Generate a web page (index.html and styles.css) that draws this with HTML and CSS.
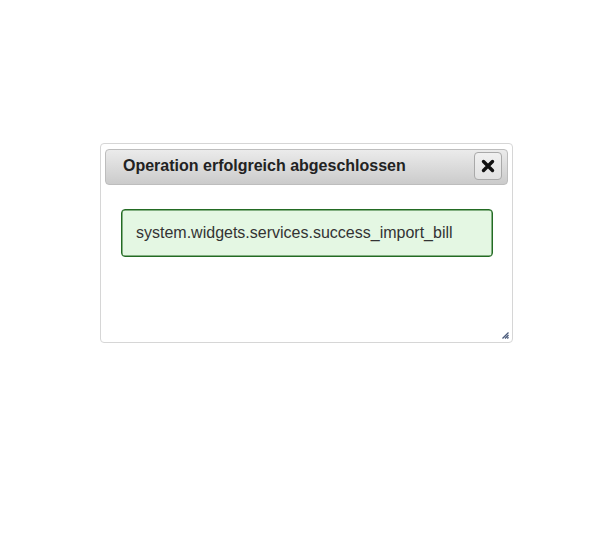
FILE: index.html
```html
<!DOCTYPE html>
<html lang="de">
<head>
<meta charset="utf-8">
<title>Dialog</title>
<link rel="stylesheet" href="styles.css">
</head>
<body>
<div class="stage">
  <div class="dialog">
    <div class="titlebar">
      <span class="title">Operation erfolgreich abgeschlossen</span>
      <button class="close" type="button" aria-label="Schließen">
        <svg width="14" height="14" viewBox="0 0 14 14"><path d="M2.5 2.5 L11.5 11.5 M11.5 2.5 L2.5 11.5" stroke="#111" stroke-width="3.4" stroke-linecap="round"/></svg>
      </button>
    </div>
    <div class="content">
      <div class="message">system.widgets.services.success_import_bill</div>
    </div>
    <div class="grip">
      <svg width="7" height="7" viewBox="0 0 7 7"><path d="M6.5 0.5 L0.5 6.5 M6.5 3 L3 6.5 M6.5 5.3 L5.3 6.5" stroke="#4a5a7a" stroke-width="1.3"/></svg>
    </div>
  </div>
</div>
</body>
</html>
```

FILE: styles.css
```css
html, body {
  margin: 0;
  padding: 0;
  background: #ffffff;
}

.stage {
  padding: 143px 0 0 100px;
  font-family: "Liberation Sans", Arial, sans-serif;
}

.dialog {
  position: relative;
  box-sizing: border-box;
  width: 413px;
  height: 200px;
  border: 1px solid #d6d6d6;
  border-radius: 4px;
  padding: 5px 4px;
  background: #fff;
}

.titlebar {
  box-sizing: border-box;
  height: 36px;
  border: 1px solid #bdbdbd;
  border-radius: 4px;
  background: linear-gradient(#ebebeb, #cbcbcb);
  display: flex;
  align-items: center;
  justify-content: space-between;
  padding: 0 5px 2px 17px;
}

.title {
  font-weight: bold;
  font-size: 16px;
  color: #222;
}

.close {
  box-sizing: border-box;
  width: 28px;
  height: 28px;
  border: 1px solid #a9a9a9;
  border-radius: 4px;
  background: linear-gradient(#f0f0f0, #e2e2e2);
  display: flex;
  align-items: center;
  justify-content: center;
  padding: 0;
}

.content {
  padding: 24px 15px 0 16px;
}

.message {
  box-sizing: border-box;
  height: 48px;
  border: 1px solid #236b23;
  box-shadow: inset 0 0 0 0.5px #236b23;
  border-radius: 4px;
  background: #e4f7e3;
  color: #333;
  font-size: 16px;
  display: flex;
  align-items: center;
  padding: 0 0 1px 14px;
}

.grip {
  position: absolute;
  right: 3px;
  bottom: 3px;
  width: 7px;
  height: 7px;
  display: flex;
}
```
